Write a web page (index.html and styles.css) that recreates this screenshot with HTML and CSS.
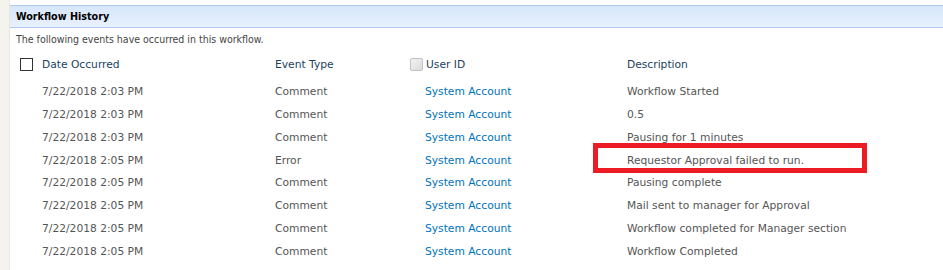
FILE: index.html
```html
<!DOCTYPE html>
<html>
<head>
<meta charset="utf-8">
<link rel="stylesheet" href="styles.css">
</head>
<body>
<div class="page">
  <div class="side"></div>
  <div class="main">
    <div class="bar">Workflow History</div>
    <div class="intro">The following events have occurred in this workflow.</div>
    <table class="hist">
      <colgroup>
        <col class="c-chk"><col class="c-date"><col class="c-type"><col class="c-user"><col class="c-desc">
      </colgroup>
      <thead>
        <tr>
          <th><span class="chk"></span></th>
          <th>Date Occurred</th>
          <th>Event Type</th>
          <th class="uid"><span class="chk dis"></span>User ID</th>
          <th>Description</th>
        </tr>
      </thead>
      <tbody>
        <tr><td></td><td>7/22/2018 2:03 PM</td><td>Comment</td><td class="u"><a href="#">System Account</a></td><td>Workflow Started</td></tr>
        <tr><td></td><td>7/22/2018 2:03 PM</td><td>Comment</td><td class="u"><a href="#">System Account</a></td><td>0.5</td></tr>
        <tr><td></td><td>7/22/2018 2:03 PM</td><td>Comment</td><td class="u"><a href="#">System Account</a></td><td>Pausing for 1 minutes</td></tr>
        <tr><td></td><td>7/22/2018 2:05 PM</td><td>Error</td><td class="u"><a href="#">System Account</a></td><td class="d"><span class="mark"></span>Requestor Approval failed to run.</td></tr>
        <tr><td></td><td>7/22/2018 2:05 PM</td><td>Comment</td><td class="u"><a href="#">System Account</a></td><td>Pausing complete</td></tr>
        <tr><td></td><td>7/22/2018 2:05 PM</td><td>Comment</td><td class="u"><a href="#">System Account</a></td><td>Mail sent to manager for Approval</td></tr>
        <tr><td></td><td>7/22/2018 2:05 PM</td><td>Comment</td><td class="u"><a href="#">System Account</a></td><td>Workflow completed for Manager section</td></tr>
        <tr><td></td><td>7/22/2018 2:05 PM</td><td>Comment</td><td class="u"><a href="#">System Account</a></td><td>Workflow Completed</td></tr>
      </tbody>
    </table>
  </div>
</div>
</body>
</html>
```
FILE: styles.css
```css
html, body {
  margin: 0;
  padding: 0;
  background: #fff;
}
body {
  font-family: "DejaVu Sans", sans-serif;
  font-size: 10.7px;
  color: #555;
}
.page {
  display: flex;
  width: 943px;
  height: 270px;
  overflow: hidden;
}
.side {
  width: 9px;
  flex: none;
  background: #f4f3ee;
  border-right: 1px solid #e6e5de;
}
.main {
  flex: 1;
  padding-top: 5px;
  min-width: 0;
}
.bar {
  height: 21px;
  line-height: 21px;
  border-top: 1px solid #aecbf2;
  border-bottom: 1px solid #aecbf2;
  background: linear-gradient(#d6e6fb, #e8f1fd);
  font-family: "DejaVu Sans Condensed", "DejaVu Sans", sans-serif;
  font-size: 10.7px;
  font-weight: bold;
  color: #000;
  padding-left: 6px;
}
.intro {
  margin-top: 3px;
  line-height: 16px;
  padding-left: 6px;
  color: #444;
  font-family: "DejaVu Sans Condensed", "DejaVu Sans", sans-serif;
  font-size: 10.5px;
}
.hist {
  margin-top: 6px;
  margin-left: 10px;
  border-collapse: collapse;
  table-layout: fixed;
  width: 923px;
}
.c-chk { width: 22px; }
.c-date { width: 233px; }
.c-type { width: 135px; }
.c-user { width: 217px; }
.hist th {
  font-weight: normal;
  color: #1c3f5f;
  text-align: left;
  padding: 0 0 4px 0;
  height: 23px;
  vertical-align: middle;
  white-space: nowrap;
}
.hist td {
  padding: 0;
  height: 22.86px;
  white-space: nowrap;
  vertical-align: middle;
}
.hist td.u { padding-left: 15px; }
.hist a {
  color: #0072bc;
  text-decoration: none;
}
.chk {
  display: inline-block;
  width: 11px;
  height: 11px;
  border: 1px solid #333;
  background: #fff;
  vertical-align: -3px;
}
.chk.dis {
  border-color: #c2c2c2;
  border-radius: 2px;
  background: linear-gradient(135deg, #f2f2f2, #dcdcdc);
  margin-right: 3px;
}
.d { position: relative; }
.mark {
  position: absolute;
  left: -34px;
  top: -6px;
  width: 264px;
  height: 20px;
  border: 5px solid #ed1c24;
}
```
